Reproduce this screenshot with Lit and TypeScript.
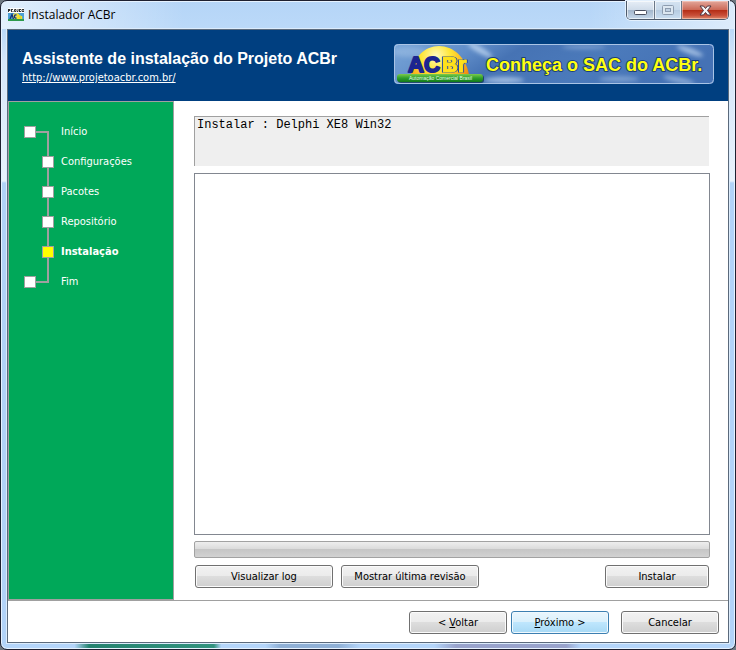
import { LitElement, html, css } from "lit";
import { customElement, state } from "lit/decorators.js";
import { classMap } from "lit/directives/class-map.js";

@customElement("acbr-banner")
class AcbrBanner extends LitElement {
  static styles = css`
    :host { display: block; flex: none; }
    svg { display: block; width: 320px; height: 40px; }
    .word { font: bold 18px "Liberation Sans", sans-serif; fill: #ffff10; stroke: #1d3f78; stroke-width: 2; stroke-linejoin: round; paint-order: stroke; }
    .logo { font: bold 22px "Liberation Sans", sans-serif; stroke-linejoin: round; paint-order: stroke; }
    .blue { fill: #1c2590; stroke: #1c2590; stroke-width: 2; }
    .gold { fill: #ffe21a; stroke: #ffe21a; stroke-width: 1; filter: drop-shadow(1px 0 0 #2a4aa0) drop-shadow(-1px 0 0 #2a4aa0); }
    .tag { font: 5px "Liberation Sans", sans-serif; fill: #e9ffe9; }
  `;
  render() {
    return html`<svg viewBox="0 0 320 40" role="img" aria-label="Conheça o SAC do ACBr.">
      <defs>
        <linearGradient id="sky" x1="0" x2="1" y1="0" y2="0.2">
          <stop offset="0" stop-color="#78a5d8"/><stop offset="0.25" stop-color="#618ec9"/>
          <stop offset="0.4" stop-color="#4673b4"/><stop offset="0.7" stop-color="#4b7abb"/>
          <stop offset="1" stop-color="#4572b5"/>
        </linearGradient>
        <radialGradient id="sun" gradientUnits="userSpaceOnUse" cx="42" cy="12" r="36">
          <stop offset="0" stop-color="#fffbc0"/><stop offset="0.4" stop-color="#ffe637"/><stop offset="0.8" stop-color="#fbb01c"/><stop offset="1" stop-color="#f08a10"/>
        </radialGradient>
        <linearGradient id="grass" x1="0" x2="0" y1="0" y2="1">
          <stop offset="0" stop-color="#7ccb4a"/><stop offset="0.5" stop-color="#2f9f2c"/><stop offset="1" stop-color="#117a1a"/>
        </linearGradient>
        <filter id="soft" x="-50%" y="-50%" width="200%" height="200%"><feGaussianBlur stdDeviation="2"/></filter>
        <clipPath id="edge"><rect width="320" height="40" rx="4"/></clipPath>
      </defs>
      <g clip-path="url(#edge)">
        <rect width="320" height="40" fill="url(#sky)"/>
        <g filter="url(#soft)" fill="#c3d9f2">
          <ellipse cx="86" cy="6" rx="14" ry="3" opacity="0.8" transform="rotate(30 86 6)"/>
          <ellipse cx="16" cy="8" rx="18" ry="5" opacity="0.3"/>
          <ellipse cx="110" cy="36" rx="20" ry="3" opacity="0.7"/>
          <ellipse cx="190" cy="3" rx="22" ry="2" opacity="0.4"/>
          <ellipse cx="225" cy="35" rx="20" ry="3" opacity="0.4"/>
          <ellipse cx="296" cy="7" rx="14" ry="3" opacity="0.7" transform="rotate(20 296 7)"/>
          <ellipse cx="285" cy="36" rx="16" ry="3" opacity="0.5" transform="rotate(12 285 36)"/>
        </g>
      </g>
      <path d="M17 31C19 13 31 2 45 2S72 13 75 31Z" fill="url(#sun)"/>
      <text class="logo blue" x="14" y="28">AC</text>
      <text class="logo gold" x="48" y="28">Br</text>
      <rect x="4" y="31" width="86" height="8" rx="3" fill="#0b2c4a" opacity="0.7"/>
      <rect x="3" y="30" width="86" height="8" rx="3" fill="url(#grass)"/>
      <text class="tag" x="15" y="36">Automação Comercial Brasil</text>
      <text class="word" x="92" y="27">Conheça o SAC do ACBr.</text>
      <rect x="0.5" y="0.5" width="319" height="39" rx="4" fill="none" stroke="#a9c4e6"/>
    </svg>`;
  }
}

@customElement("app-root")
class AppRoot extends LitElement {
  @state() steps = ["Início", "Configurações", "Pacotes", "Repositório", "Instalação", "Fim"];
  @state() current = 4;

  static styles = css`
    :host { display: block; background: #6e7780; font: 11px/14px "DejaVu Sans Condensed", "Noto Sans", sans-serif; color: #000; }
    *, ::before { box-sizing: border-box; }
    .window {
      min-height: 100vh; display: flex; flex-direction: column; padding: 0 6px 6px;
      border: 1px solid #1e2030; border-radius: 7px;
      background:
        linear-gradient(90deg, #b4d5fa 0 10%, #258370 12%, #32937f 29%, #b4d5fa 30% 36%, #8fb0d6 38% 46%, #b4d5fa 49% 59%, #98a3cc 62% 77%, #b4d5fa 79%) bottom / 100% 6px no-repeat,
        linear-gradient(90deg, rgba(255,255,255,0.6), transparent 25% 80%, rgba(255,255,255,0.5)) top / 100% 28px no-repeat,
        linear-gradient(#b5d5f7, #bbd9f8 28px, #d5e6f9 60px, #e9f2fc 180px, #b2d3f8 182px);
      box-shadow: inset 0 0 0 1px #e6f2ff;
    }
    .titlebar { display: flex; height: 28px; justify-content: space-between; align-items: flex-start; }
    .caption { display: flex; align-items: center; gap: 4px; height: 28px; margin: 0; font: 12px/16px "Open Sans", sans-serif; padding-left: 1px; }
    .caption svg { width: 16px; height: 16px; }
    .controls { display: flex; height: 19px; border: 1px solid #4d5a6b; border-top: 0; border-radius: 0 0 5px 5px; overflow: hidden; box-shadow: 0 0 0 1px #e3f0fd; }
    .controls button { width: 28px; border: 0; border-right: 1px solid #6b7888; padding: 0; display: grid; place-items: center; background: linear-gradient(#e6eef7, #d0dcea 48%, #a3b6cb 50%, #c6d8ea); box-shadow: inset 0 0 0 1px rgba(255,255,255,0.6); }
    .controls .minimize { padding-top: 5px; }
    .controls .maximize { width: 27px; background: linear-gradient(#d5e3f1, #c8d9ea 48%, #b6cbe0 50%, #cbdff2); }
    .controls .close { width: 46px; border-right: 0; background: linear-gradient(#e2a79b, #cd6a58 48%, #b32b14 50%, #c9503a 80%, #dd8a6c); box-shadow: inset 0 0 0 1px rgba(255,220,210,0.5); }
    .controls svg { display: block; }
    .client { flex: 1; display: flex; flex-direction: column; background: #fff; border: 1px solid #5b6a7c; box-shadow: 0 0 0 1px #dcecfc; }
    header { background: #003f80; color: #fff; display: flex; justify-content: space-between; align-items: flex-start; height: 71px; padding: 14px 14px 0; }
    h1 { font: bold 16px/20px "Liberation Sans", sans-serif; margin: 5px 0 2px; }
    header a { color: #fff; display: block; }
    .body { flex: 1; display: flex; border-bottom: 1px solid #a0a0a0; }
    nav { flex: none; width: 166px; background: #00a859; border: 1px solid #a0a0a0; padding: 15px; color: #fff; }
    ol { list-style: none; margin: 0; padding: 0; }
    li { display: flex; align-items: center; height: 30px; --line: linear-gradient(#a0a0a0, #a0a0a0); background: var(--line) 23px 0 / 2px 100% no-repeat; }
    li::before { content: ""; flex: none; width: 12px; height: 12px; margin: 0 7px 0 18px; background: #fff; border: 1px solid #a0a0a0; }
    li.first { background: var(--line) 23px 14px / 2px 16px no-repeat, var(--line) 0 14px / 25px 2px no-repeat; }
    li.last { background: var(--line) 23px 0 / 2px 16px no-repeat, var(--line) 0 14px / 25px 2px no-repeat; }
    li.first::before, li.last::before { margin: 0 25px 0 0; }
    li.current { font-weight: bold; }
    li.current::before { background: #ff0; }
    main { flex: 1; min-width: 0; display: flex; flex-direction: column; padding: 15px 18px 12px 20px; }
    .status { height: 50px; background: #efefef; border: 1px solid #a0a0a0; border-width: 1px 0 0 1px; padding: 1px 2px; margin: 0 1px 7px 0; font: 12px/14px "Liberation Mono", monospace; }
    textarea { flex: 1; display: block; width: 100%; resize: none; border: 1px solid #828790; background: #fff; margin: 0 0 6px; padding: 2px; outline: 0; font: 12px/14px "Liberation Mono", monospace; }
    progress { appearance: none; display: block; width: 100%; height: 17px; margin-bottom: 7px; border: 1px solid #a2a2a2; border-radius: 2px; background: linear-gradient(#eee, #dcdcdc 45%, #c6c6c6 50%, #d2d2d2); overflow: hidden; }
    progress::-webkit-progress-bar { background: transparent; }
    .actions { display: flex; gap: 8px; padding: 0 1px; }
    .btn { width: 98px; height: 23px; padding: 1px 0 0; font: inherit; color: #000; border: 1px solid #707070; border-radius: 3px; background: linear-gradient(#f2f2f2, #ebebeb 48%, #dddddd 50%, #cfcfcf); box-shadow: inset 0 0 0 1px #fbfbfb; }
    .btn.wide { width: 138px; }
    .btn.install { width: 104px; margin-left: auto; }
    .btn.primary { border-color: #3c7fb1; background: linear-gradient(#eaf6fd, #d9f0fc 48%, #bee6fd 50%, #a7d9f5); box-shadow: inset 0 0 0 1px #f0f9fe; }
    footer { display: flex; justify-content: flex-end; gap: 12px; padding: 10px 9px 8px; }
    .pair { display: flex; gap: 4px; }
  `;

  render() {
    return html`
      <div class="window">
        <div class="titlebar">
          <p class="caption">
            <svg viewBox="0 0 16 16" aria-hidden="true">
              <rect y="1" width="16" height="13" fill="#fff"/>
              <path d="M0.500 2v3M0.500 2.500h1.500v1H0.500M3.500 2v3M3.500 2.500h1.500M5 4v1M6.500 2.500h1.500v2H6.500zM10 2v2.500H9M11.500 2v3M11.500 2.500h1.500M11.500 4.500h1.500M14 2.500h2v2h-2z" stroke="#222" stroke-width="0.900" fill="none"/>
              <rect y="6" width="16" height="8" fill="#4b9fd4"/>
              <circle cx="8" cy="9.500" r="3.500" fill="#e8dc57"/>
              <path d="M2 12L4 7.500L5.500 12M8.500 8Q6.500 7.500 6.500 9.500T8.500 11" stroke="#12357c" stroke-width="1.300" fill="none"/>
              <path d="M10 7v4.500h2V9h-2M13.500 12V9" stroke="#f8e020" stroke-width="1.300" fill="none"/>
              <rect y="12" width="16" height="2" fill="#2d9a4c"/>
            </svg>
            Instalador ACBr
          </p>
          <div class="controls">
            <button class="minimize" aria-label="Minimizar"><svg width="13" height="6"><rect x="0.5" y="0.5" width="12" height="4" rx="1" fill="#fff" stroke="#4a4f5e"/></svg></button>
            <button class="maximize" aria-label="Maximizar" disabled><svg width="12" height="10"><rect x="0.5" y="0.5" width="11" height="9" rx="1" fill="#dce7f1" stroke="#8d9caf"/><rect x="3.500" y="3.500" width="5" height="3" fill="#bfd0e2" stroke="#8d9caf"/></svg></button>
            <button class="close" aria-label="Fechar"><svg width="13" height="11"><path d="M1 1h3.500l2 2.500 2-2.500H12L8.500 5.500 12 10H8.500l-2-2.500-2 2.500H1l3.500-4.500z" fill="#f6f6f6" stroke="#4c3540"/></svg></button>
          </div>
        </div>
        <div class="client">
          <header>
            <div>
              <h1>Assistente de instalação do Projeto ACBr</h1>
              <a href="http://www.projetoacbr.com.br/">http://www.projetoacbr.com.br/</a>
            </div>
            <acbr-banner></acbr-banner>
          </header>
          <div class="body">
            <nav aria-label="Etapas">
              <ol>
                ${this.steps.map((s, i) => html`<li class=${classMap({ first: i === 0, last: i === this.steps.length - 1, current: i === this.current })}>${s}</li>`)}
              </ol>
            </nav>
            <main>
              <div class="status" role="status">Instalar : Delphi XE8 Win32</div>
              <textarea readonly aria-label="Log da instalação"></textarea>
              <progress value="0" max="100" aria-label="Progresso"></progress>
              <div class="actions">
                <button class="btn wide">Visualizar log</button>
                <button class="btn wide">Mostrar última revisão</button>
                <button class="btn install">Instalar</button>
              </div>
            </main>
          </div>
          <footer>
            <div class="pair">
              <button class="btn">&lt; <u>V</u>oltar</button>
              <button class="btn primary"><u>P</u>róximo &gt;</button>
            </div>
            <button class="btn">Cancelar</button>
          </footer>
        </div>
      </div>`;
  }
}
